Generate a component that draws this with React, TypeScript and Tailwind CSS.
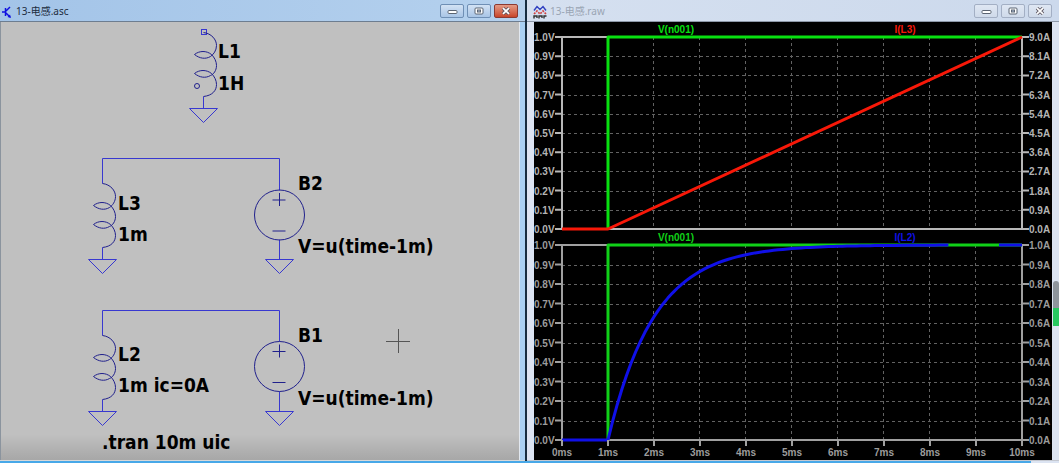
import type { ReactNode } from 'react'

interface Trace {
  name: string
  color: string
  labelX: number
  points: string
}

interface PaneProps {
  top: number
  bottom: number
  leftTicks: string[]
  rightTicks: string[]
  axisColor: string
  labelColor: string
  children: ReactNode
}

// Plot area inside the waveform canvas
const PLOT_LEFT = 28
const PLOT_RIGHT = 488
const MS = (PLOT_RIGHT - PLOT_LEFT) / 10

const volts = Array.from({ length: 11 }, (_, i) => `${(1 - i / 10).toFixed(1)}V`)
const ampsHigh = Array.from({ length: 11 }, (_, i) => `${(9 - i * 0.9).toFixed(1)}A`)
const ampsLow = Array.from({ length: 11 }, (_, i) => `${(1 - i / 10).toFixed(1)}A`)

function xAt(ms: number) {
  return PLOT_LEFT + ms * MS
}

// Inductor current for a unit step applied at 1ms, tau = 1ms
function risePoints(top: number, bottom: number) {
  const points = [`${xAt(0)},${bottom}`]
  for (let t = 1; t <= 8.4; t += 0.1) {
    const y = bottom - (bottom - top) * (1 - Math.exp(1 - t))
    points.push(`${xAt(t).toFixed(1)},${y.toFixed(1)}`)
  }
  return points.join(' ')
}

function CaptionButtons({ active = false }: { active?: boolean }) {
  const base = 'flex h-3.5 w-6 items-center justify-center rounded-xs border'
  const normal = active
    ? 'border-[#6f8fb5] bg-linear-to-b from-[#d3e2f4] to-[#a9c5e6]'
    : 'border-[#a3afc4] bg-linear-to-b from-[#dfe7f3] to-[#cfdaea]'
  const close = active ? 'border-[#8c3a32] bg-linear-to-b from-[#e39a85] to-[#c8452a]' : normal
  return (
    <div className="flex gap-[3px]">
      <button aria-label="Minimize" className={`${base} ${normal}`}>
        <svg width="11" height="8" viewBox="0 0 11 8">
          <rect x="1" y="3.5" width="9" height="3" rx="1" fill="#fff" stroke="#5b6472" />
        </svg>
      </button>
      <button aria-label="Maximize" className={`${base} ${normal}`}>
        <svg width="10" height="8" viewBox="0 0 10 8">
          <rect x="1" y="1" width="8" height="6" rx="1" fill="#fff" stroke="#5b6472" />
          <rect x="3.5" y="3" width="3" height="2" fill="#aebfd6" stroke="#5b6472" />
        </svg>
      </button>
      <button aria-label="Close" className={`${base} ${close}`}>
        <svg width="10" height="8" viewBox="0 0 10 8">
          <path d="M2 1.2 8 6.8M8 1.2 2 6.8" stroke="#5b5560" strokeWidth="3.4" />
          <path d="M2 1.2 8 6.8M8 1.2 2 6.8" stroke="#fff" strokeWidth="1.8" />
        </svg>
      </button>
    </div>
  )
}

function Inductor({ x, y }: { x: number; y: number }) {
  return (
    <path
      transform={`translate(${x} ${y})`}
      d="M0 0C8 1 13 7 13 13C13 18 10 22 7 24C2 27 -4 26 -9 22C-4 18 3 18 8 22C11 25 13 29 13 33C13 38 10 42 7 43C2 46 -4 45 -9 41C-4 37 3 37 8 41C11 44 13 48 13 52C13 58 9 63 0 64"
      stroke="#20208c"
    />
  )
}

function Ground({ x, y }: { x: number; y: number }) {
  return <path d={`M${x} ${y - 12}V${y}M${x - 14} ${y}H${x + 14}L${x} ${y + 14}Z`} />
}

function Source({ x, y }: { x: number; y: number }) {
  return (
    <g stroke="#20208c">
      <circle cx={x} cy={y} r="25" />
      <path d={`M${x - 7} ${y - 15}H${x + 6}M${x} ${y - 22}V${y - 9}M${x - 7} ${y + 16}H${x + 6}`} />
    </g>
  )
}

function Schematic() {
  return (
    <svg viewBox="0 0 518 438" className="block h-auto w-full bg-[#c0c0c0]" role="img" aria-label="Schematic">
      <defs>
        <linearGradient id="sheetShade" x1="0" y1="0" x2="0" y2="1">
          <stop offset="0" stopColor="#000" stopOpacity="0" />
          <stop offset="1" stopColor="#000" stopOpacity="0.13" />
        </linearGradient>
      </defs>
      <rect x="0" y="412" width="518" height="26" fill="url(#sheetShade)" />

      <g fill="none" stroke="#3838d0">
        {/* L1 */}
        <rect x="200.5" y="7.5" width="5" height="5" />
        <Inductor x={202.5} y={10.5} />
        <circle cx="196" cy="64" r="2.5" stroke="#20208c" />
        <Ground x={202.5} y={86.5} />

        {/* L3 / B2 */}
        <path d="M101.5 161.5V136.5H278.5V168.5M278.5 217.5V226" />
        <Inductor x={101.5} y={161.5} />
        <Ground x={101.5} y={237.5} />
        <Source x={278.5} y={193} />
        <Ground x={278.5} y={237.5} />

        {/* L2 / B1 */}
        <path d="M101.5 313.5V288.5H278.5V319.5M278.5 369.5V378" />
        <Inductor x={101.5} y={313.5} />
        <Ground x={101.5} y={389.5} />
        <Source x={278.5} y={344.5} />
        <Ground x={278.5} y={389.5} />
      </g>

      <path d="M385 319.5H409M397.5 307V331" stroke="#555" />

      <g fill="#000" className="font-['DejaVu_Sans_Condensed','DejaVu_Sans',sans-serif] text-[19px] font-bold">
        <text x="217" y="36">L1</text>
        <text x="217" y="68">1H</text>
        <text x="117" y="188">L3</text>
        <text x="117" y="219">1m</text>
        <text x="297" y="168">B2</text>
        <text x="297" y="231">V=u(time-1m)</text>
        <text x="117" y="339">L2</text>
        <text x="117" y="370">1m ic=0A</text>
        <text x="297" y="320">B1</text>
        <text x="297" y="383">V=u(time-1m)</text>
        <text x="101" y="427">.tran 10m uic</text>
      </g>
    </svg>
  )
}

function Pane({ top, bottom, leftTicks, rightTicks, axisColor, labelColor, children }: PaneProps) {
  const step = (bottom - top) / 10
  return (
    <g fill="none">
      <g stroke="#626262" strokeDasharray="3 3">
        {leftTicks.slice(1, -1).map((tick, i) => {
          const y = Math.round(top + (i + 1) * step) + 0.5
          return <path key={tick} d={`M${PLOT_LEFT} ${y}H${PLOT_RIGHT}`} />
        })}
        {[1, 2, 3, 4, 5, 6, 7, 8, 9].map((ms) => (
          <path key={ms} d={`M${Math.round(xAt(ms)) - 0.5} ${top}V${bottom}`} />
        ))}
      </g>
      <rect
        x={PLOT_LEFT}
        y={top}
        width={PLOT_RIGHT - PLOT_LEFT}
        height={bottom - top}
        stroke={axisColor}
        strokeWidth="2"
      />
      {leftTicks.map((tick, i) => {
        const y = top + i * step
        return (
          <g key={tick}>
            <path d={`M${PLOT_LEFT - 7} ${y}h7M${PLOT_RIGHT} ${y}h7`} stroke={axisColor} strokeWidth="2" />
            <text x="0" y={y + 4} fill={labelColor}>{tick}</text>
            <text x={PLOT_RIGHT + 7} y={y + 4} fill={labelColor}>{rightTicks[i]}</text>
          </g>
        )
      })}
      {children}
    </g>
  )
}

function TraceLine({ name, color, labelX, points, labelY }: Trace & { labelY: number }) {
  return (
    <g>
      <text x={labelX} y={labelY} fill={color} textAnchor="middle">{name}</text>
      <polyline points={points} stroke={color} strokeWidth="3" strokeLinejoin="round" />
    </g>
  )
}

function Waveforms() {
  const upper = { top: 15, bottom: 207 }
  const lower = { top: 223, bottom: 418 }

  return (
    <svg
      viewBox="0 0 518 438"
      className="block h-auto w-full bg-black font-['Liberation_Sans',Arial,sans-serif] text-[10px] font-bold"
      role="img"
      aria-label="Waveforms"
    >
      <Pane {...upper} leftTicks={volts} rightTicks={ampsHigh} axisColor="#b8b8b8" labelColor="#b4b4b4">
        <TraceLine
          name="V(n001)"
          color="#08e010"
          labelX={142}
          labelY={11}
          points={`${xAt(1)},${upper.bottom} ${xAt(1)},${upper.top} ${xAt(10)},${upper.top}`}
        />
        <TraceLine
          name="I(L3)"
          color="#f81808"
          labelX={371}
          labelY={11}
          points={`${xAt(0)},${upper.bottom} ${xAt(1)},${upper.bottom} ${xAt(10)},${upper.top}`}
        />
      </Pane>

      <Pane {...lower} leftTicks={volts} rightTicks={ampsLow} axisColor="#a0a0a0" labelColor="#9c9c9c">
        <TraceLine
          name="V(n001)"
          color="#10d018"
          labelX={142}
          labelY={219}
          points={`${xAt(1)},${lower.bottom} ${xAt(1)},${lower.top} ${xAt(10)},${lower.top}`}
        />
        <TraceLine
          name="I(L2)"
          color="#1010e8"
          labelX={371}
          labelY={219}
          points={risePoints(lower.top, lower.bottom)}
        />
        <path d={`M${xAt(9.5)} ${lower.top}H${PLOT_RIGHT}`} stroke="#1010e8" strokeWidth="3" />
      </Pane>

      <g fill="#9c9c9c" textAnchor="middle">
        {Array.from({ length: 11 }, (_, ms) => (
          <g key={ms}>
            <path d={`M${xAt(ms)} 418v6`} stroke="#a0a0a0" strokeWidth="2" />
            <text x={xAt(ms)} y="434">{ms}ms</text>
          </g>
        ))}
      </g>
    </svg>
  )
}

export default function App() {
  return (
    <main className="font-['Noto_Sans','Noto_Sans_CJK_SC',sans-serif] text-[10px]">
      <div className="flex gap-0.5 bg-[#162c40]">
        {/* Schematic window */}
        <section className="min-w-0 flex-[525] bg-[#a9d0f3]">
          <header className="flex h-[22px] items-center justify-between border-b border-[#6d7d90] bg-linear-to-r from-[#a3c4e8] to-[#b5d1ee] pr-[7px] pl-0.5">
            <h1 className="flex items-center gap-1 pt-0.5 text-[#1c2c40]">
              <svg width="10" height="14" viewBox="0 0 10 14" fill="none" stroke="#1010e0" strokeWidth="1.5">
                <path d="M0 7H3M3.5 3V11M4 6 8 2M4 8 8 12" />
                <path d="M9 13 5.5 12 8 9.5Z" fill="#1010e0" stroke="none" />
              </svg>
              13-电感.asc
            </h1>
            <CaptionButtons active />
          </header>
          <div className="mr-[5px] border-r border-l border-[#e2e8f0] border-l-[#8b949e]">
            <Schematic />
          </div>
          <div className="h-px bg-[#d8d8d8]" />
        </section>

        {/* Waveform window */}
        <section className="relative min-w-0 flex-[532] bg-[#dce4f2]">
          <header className="flex h-[22px] items-center justify-between border-b border-[#8d98a8] bg-linear-to-r from-[#d5e0f0] to-[#ccd9ec] pr-[7px] pl-1.5">
            <h1 className="flex items-center gap-[3px] pt-0.5 text-[#9aa5b4]">
              <svg width="14" height="14" viewBox="0 0 14 14" fill="none">
                <path d="M1 5.5 4 1.5 7 4.5 10 1.5 13 5.5" stroke="#3040c0" strokeWidth="1.4" />
                <path d="M1 9 4 6 7 9 10 6 13 9" stroke="#d04040" strokeWidth="1.6" strokeDasharray="2 1" />
                <path d="M1 13.5V11H4V13M6 13.5V11H9V13M11 13.5V11H13.5" stroke="#303030" strokeWidth="1.4" />
              </svg>
              13-电感.raw
            </h1>
            <CaptionButtons />
          </header>
          <div className="mr-[7px] ml-[7px]">
            <Waveforms />
          </div>
          <div className="h-px bg-[#c4c8d0]" />
          <div className="absolute top-[281px] right-0 h-[45px] w-1.5 rounded-t-sm bg-linear-to-b from-[#8e959c] from-60% to-[#28c860] to-60%" />
        </section>
      </div>
      <footer className="bg-[#dce4f2]">
        <div className="mr-7 h-0.5 bg-[#48a8e8]" />
      </footer>
    </main>
  )
}
